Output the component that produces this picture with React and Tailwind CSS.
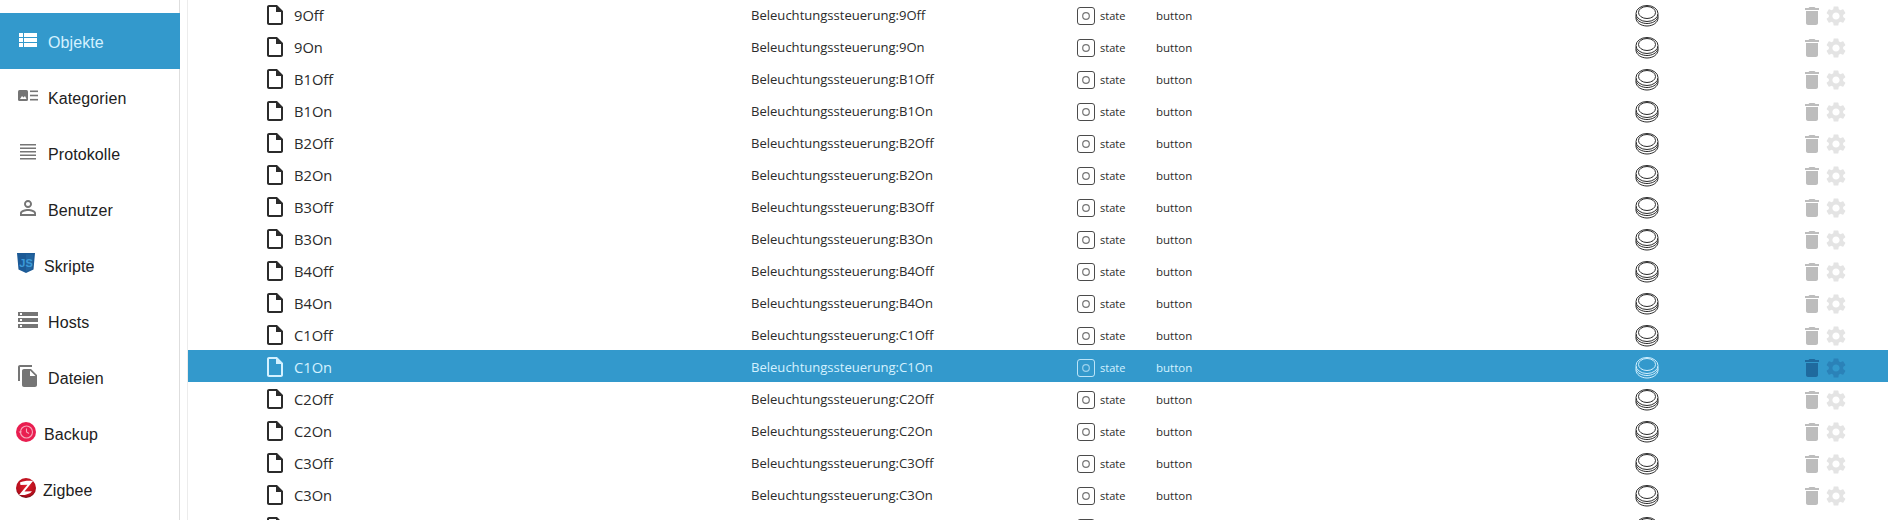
import React from 'react';
import { MdViewList, MdPersonOutline, MdStorage, MdFileCopy, MdDelete, MdSettings, MdOutlineInsertDriveFile } from 'react-icons/md';

const KategorienIcon = () => (
  <svg width="20" height="12" viewBox="0 0 20 12" fill="currentColor">
    <rect x="0" y="0" width="10" height="11" rx="1.5" />
    <path d="M2 9l2-3 1.500 1.500L7 6l1.500 3z" fill="#fff" />
    <rect x="12" y="0.5" width="8" height="1.6" />
    <rect x="12" y="4.7" width="8" height="1.6" />
    <rect x="12" y="8.9" width="8" height="1.6" />
  </svg>
);

const ProtokolleIcon = () => (
  <svg width="16" height="16" viewBox="0 0 16 16" fill="currentColor">
    <rect y="0" width="16" height="1.5" />
    <rect y="3.5" width="16" height="1.5" />
    <rect y="7" width="16" height="1.5" />
    <rect y="10.5" width="16" height="1.5" />
    <rect y="14" width="16" height="1.5" />
  </svg>
);

const JsIcon = () => (
  <svg width="18" height="20" viewBox="0 0 18 20">
    <path d="M0 0h18l-1.500 16.500L9 20l-7.500-3.500z" fill="#1c5a96" />
    <path d="M9 1.500h7.300L15 15.500l-6 3z" fill="#22649f" />
    <text x="9" y="13.500" textAnchor="middle" fontSize="11" fontWeight="700" fontFamily="Liberation Sans, sans-serif" fill="#3c9ad8">JS</text>
  </svg>
);

const BackupIcon = () => (
  <svg width="20" height="20" viewBox="0 0 20 20">
    <circle cx="10" cy="10" r="10" fill="#e91e50" />
    <circle cx="10.500" cy="10" r="6" fill="none" stroke="#f7a8bc" strokeWidth="1.100" />
    <path d="M10.500 6.500V10l2.500 1.500" fill="none" stroke="#f7a8bc" strokeWidth="1.100" />
    <path d="M2.500 9.500h3.500l-1.700 2z" fill="#f7a8bc" />
  </svg>
);

const ZigbeeIcon = () => (
  <svg width="20" height="20" viewBox="0 0 20 20">
    <defs>
      <radialGradient id="zb" cx="50%" cy="40%" r="65%">
        <stop offset="0%" stopColor="#e0202c" />
        <stop offset="75%" stopColor="#b50e1c" />
        <stop offset="100%" stopColor="#4a0b10" />
      </radialGradient>
    </defs>
    <circle cx="10" cy="10" r="10" fill="url(#zb)" />
    <path d="M4 4.500C7 3 12 2.500 17 3L8.500 13.500 16 13.200C14 16 9 17.500 3 17l8.500-10.300-7 .300z" fill="#fff" />
  </svg>
);

const StateIcon = () => (
  <svg width="18" height="18" viewBox="0 0 18 18" fill="none" stroke="currentColor">
    <rect x="0.500" y="0.500" width="17" height="17" rx="2.500" strokeOpacity="0.85" />
    <circle cx="9" cy="9" r="3.300" strokeOpacity="0.65" strokeWidth="1.200" />
  </svg>
);

const ButtonIcon = () => (
  <svg width="24" height="22" viewBox="0 0 24 22" fill="none" stroke="currentColor" strokeWidth="1">
    <ellipse cx="12" cy="7.500" rx="8.500" ry="6" />
    <ellipse cx="12" cy="8.500" rx="11" ry="8" />
    <path d="M1 9.500v3.500c0 4.500 5 8 11 8s11-3.500 11-8V9.500" />
    <path d="M1.300 12.500c1 3.600 5.700 6 10.700 6s9.700-2.400 10.700-6" />
  </svg>
);

const NAV = [
  { label: 'Objekte', icon: <MdViewList size={24} />, box: 'ml-4 w-6 -mt-[2px]', text: 'ml-2', active: true },
  { label: 'Kategorien', icon: <KategorienIcon />, box: 'ml-[18px] w-5 -mt-[2px]', text: 'ml-[10px]' },
  { label: 'Protokolle', icon: <ProtokolleIcon />, box: 'ml-5 w-4 -mt-[3px]', text: 'ml-3' },
  { label: 'Benutzer', icon: <MdPersonOutline size={24} />, box: 'ml-4 w-6 -mt-[2px]', text: 'ml-2' },
  { label: 'Skripte', icon: <JsIcon />, box: 'ml-[17px] w-[18px] -mt-1', text: 'ml-[9px]' },
  { label: 'Hosts', icon: <MdStorage size={24} />, box: 'ml-4 w-6 -mt-[2px]', text: 'ml-2' },
  { label: 'Dateien', icon: <MdFileCopy size={24} />, box: 'ml-4 w-6 -mt-[2px]', text: 'ml-2' },
  { label: 'Backup', icon: <BackupIcon />, box: 'ml-4 w-5 -mt-[2px]', text: 'ml-2' },
  { label: 'Zigbee', icon: <ZigbeeIcon />, box: 'ml-4 w-5 -mt-[2px]', text: 'ml-[7px]' },
];

const NAMES = ['9Off', '9On', 'B1Off', 'B1On', 'B2Off', 'B2On', 'B3Off', 'B3On', 'B4Off', 'B4On', 'C1Off', 'C1On', 'C2Off', 'C2On', 'C3Off', 'C3On', ''];

function Row({ name, selected }) {
  return (
    <div className={`box-border flex h-8 items-center pt-1 ${selected ? 'bg-[#3399cc] text-[#d4f1ff]' : 'text-[#2b2b2b]'}`}>
      <div className="flex w-[563px] items-center pl-[75px]">
        <MdOutlineInsertDriveFile size={24} className="-mt-[3px]" />
        {name && <span className="-mt-[2px] ml-[7px] text-[14.700px]">{name}</span>}
      </div>
      <div className="w-[326px] text-[13.050px]">{name && `Beleuchtungssteuerung:${name}`}</div>
      <div className="flex w-[79px] items-center">
        <StateIcon />
        {name && <span className="ml-[5px] text-[11px]">state</span>}
      </div>
      <div className="w-[479px] text-[11.500px]">{name && 'button'}</div>
      <div className="-mt-[1px] w-[165px]">
        <ButtonIcon />
      </div>
      {name && (
        <div className={`flex items-center ${selected ? 'text-[#1f6a9e]' : 'text-[#bdbdbd]'}`}>
          <MdDelete size={24} />
        </div>
      )}
      {name && (
        <div className={`flex items-center ${selected ? 'text-[#2b82b8]' : 'text-[#e4e4e4]'}`}>
          <MdSettings size={24} />
        </div>
      )}
    </div>
  );
}

export default function App() {
  return (
    <div className="flex h-[520px] overflow-hidden bg-white">
      <aside className="h-full w-[180px] shrink-0 border-r border-[#dedede] pt-[13px] font-['Liberation_Sans',sans-serif] text-[16px] tracking-[0.1px] text-[#212121]">
        {NAV.map((item) => (
          <div key={item.label} className={`flex h-14 items-center ${item.active ? 'bg-[#3399cc] text-[#d4f1ff] -mr-px' : ''}`}>
            <div className={`flex shrink-0 justify-center ${item.box} ${item.active ? 'text-white' : 'text-[#757575]'}`}>{item.icon}</div>
            <span className={`mt-1 ${item.text}`}>{item.label}</span>
          </div>
        ))}
      </aside>
      <main className="ml-[7px] flex-1 overflow-hidden border-l border-[#ececec] font-['Open_Sans',sans-serif]">
        <div className="-mt-[2px]">
          {NAMES.map((name, i) => (
            <Row key={i} name={name} selected={name === 'C1On'} />
          ))}
        </div>
      </main>
    </div>
  );
}
